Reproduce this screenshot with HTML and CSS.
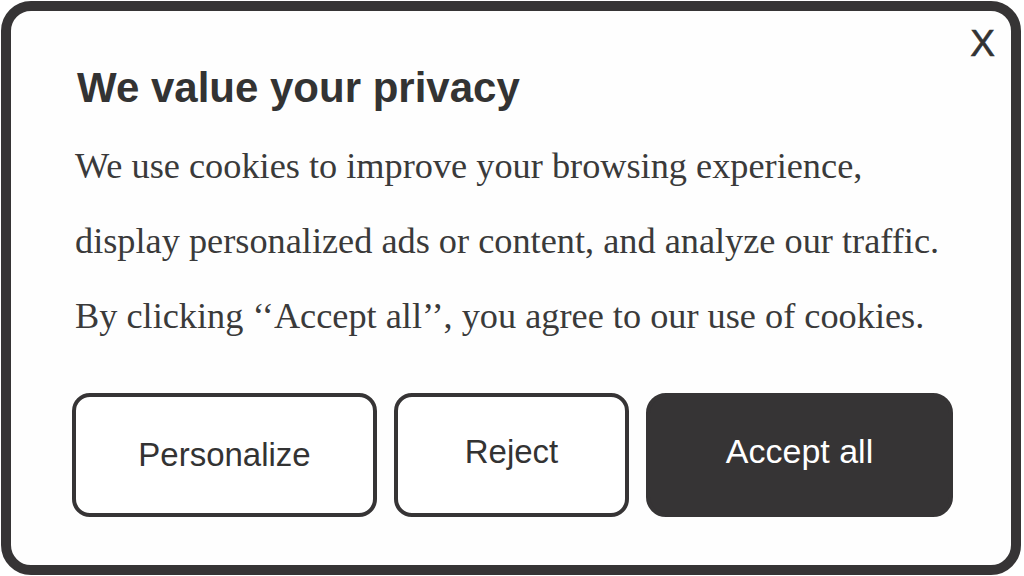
FILE: index.html
```html
<!DOCTYPE html>
<html lang="en">
<head>
<meta charset="utf-8">
<title>Cookie consent</title>
<link rel="stylesheet" href="styles.css">
</head>
<body>
<div class="panel">
  <button class="close" type="button" aria-label="Close">X</button>
  <h1 class="title">We value your privacy</h1>
  <p class="text">We use cookies to improve your browsing experience,<br>display personalized ads or content, and analyze our traffic.<br>By clicking ‘‘Accept all’’, you agree to our use of cookies.</p>
  <div class="actions">
    <button class="btn btn-personalize" type="button">Personalize</button>
    <button class="btn btn-reject btn-raised" type="button">Reject</button>
    <button class="btn btn-accept btn-raised" type="button">Accept all</button>
  </div>
</div>
</body>
</html>
```

FILE: styles.css
```css
html, body {
  margin: 0;
  padding: 0;
  background: #ffffff;
}

.panel {
  box-sizing: border-box;
  position: relative;
  width: 1020px;
  height: 574px;
  margin: 1px 0 0 1px;
  padding: 53px 0 0 61px;
  border: 10px solid #363435;
  border-radius: 30px;
  background: #fefefe;
}

.close {
  position: absolute;
  top: 14px;
  right: 16px;
  margin: 0;
  padding: 0;
  border: 0;
  background: transparent;
  font-family: "Liberation Sans", Arial, sans-serif;
  font-size: 37px;
  line-height: 37px;
  color: #333333;
  -webkit-text-stroke: 0.6px #333333;
  cursor: pointer;
}

.title {
  margin: 0;
  padding-left: 5px;
  font-family: "Liberation Sans", Arial, sans-serif;
  font-weight: bold;
  font-size: 42px;
  line-height: 48px;
  color: #333333;
}

.text {
  margin: 17px 0 0;
  padding-left: 3px;
  font-family: "Liberation Serif", "Times New Roman", serif;
  font-size: 36.3px;
  line-height: 75px;
  color: #3a3a3a;
}

.actions {
  display: flex;
  gap: 17px;
  margin-top: 39px;
}

.btn {
  box-sizing: border-box;
  height: 124px;
  margin: 0;
  padding: 0;
  border: 4px solid #363435;
  border-radius: 18px;
  background: #ffffff;
  font-family: "Liberation Sans", Arial, sans-serif;
  font-size: 33px;
  color: #333333;
  cursor: pointer;
}

.btn-raised {
  padding-bottom: 7px;
}

.btn-personalize {
  width: 305px;
}

.btn-reject {
  width: 235px;
}

.btn-accept {
  width: 307px;
  border-radius: 20px;
  background: #363435;
  color: #ffffff;
  font-size: 34px;
}
```
